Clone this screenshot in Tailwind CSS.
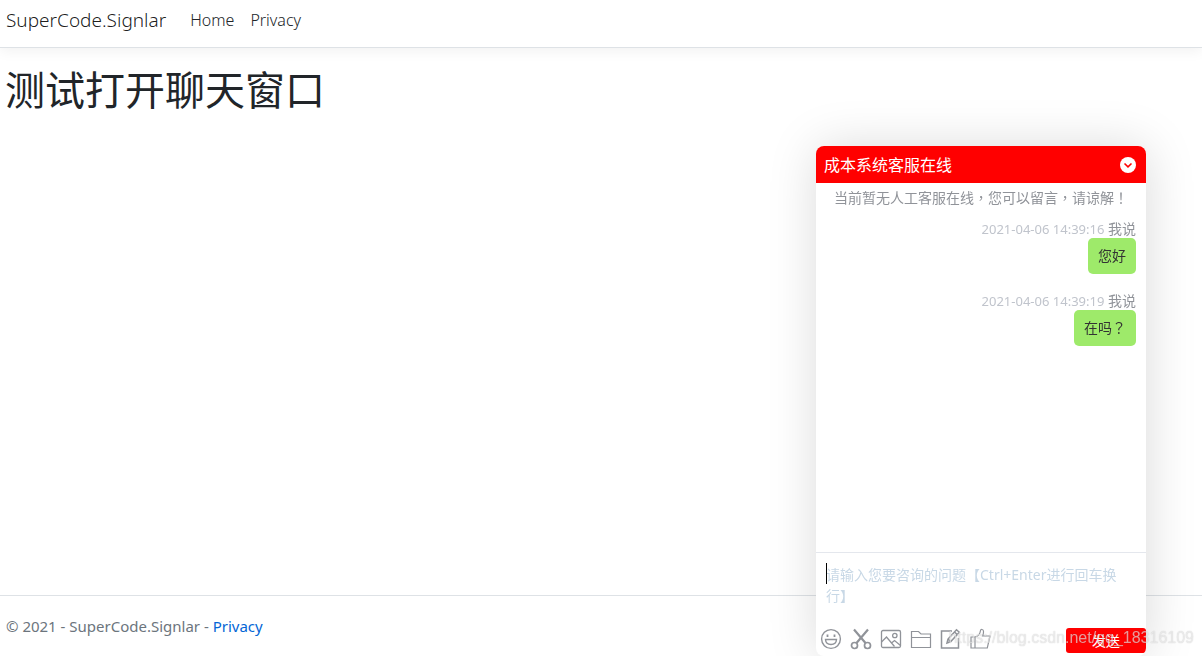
<!DOCTYPE html>
<html lang="zh-CN">
<head>
  <meta charset="UTF-8" />
  <meta name="viewport" content="width=device-width, initial-scale=1.0" />
  <title>Home Page - SuperCode.Signlar</title>
  <script src="https://cdn.jsdelivr.net/npm/@tailwindcss/browser@4"></script>
</head>
<body class="bg-white text-[#212529] min-h-screen flex flex-col overflow-hidden font-['Noto_Sans','Noto_Sans_CJK_SC',sans-serif]">

  <!-- Top Bar -->
  <header class="h-12 shrink-0 border-b border-[#dee2e6] shadow-[0_4px_12px_rgba(0,0,0,0.05)]">
    <nav class="flex items-center h-10 px-[6px]">
      <a href="#" class="text-[19px] font-light text-black/90 mr-6">SuperCode.Signlar</a>
      <a href="#" class="text-base font-light mr-4">Home</a>
      <a href="#" class="text-base font-light">Privacy</a>
    </nav>
  </header>

  <!-- Page Content -->
  <main class="grow px-[5px] pt-[18px]">
    <h1 class="text-[40px] leading-12">测试打开聊天窗口</h1>
  </main>

  <!-- Footer -->
  <footer class="h-[61px] shrink-0 border-t border-[#dee2e6] px-[6px] flex items-center text-[15px] text-[#6c757d]">
    <p>© 2021 - SuperCode.Signlar - <a href="#" class="text-[#0366d6]">Privacy</a></p>
  </footer>

  <!-- Chat Window -->
  <section class="fixed bottom-0 right-14 w-[330px] h-[510px] flex flex-col bg-white rounded-lg overflow-hidden shadow-[1px_1px_50px_rgba(0,0,0,0.15)] text-sm">
    <div class="h-[37px] shrink-0 bg-[#ff0000] text-white flex items-center justify-between pl-2 pr-[10px]">
      <h2 class="text-base">成本系统客服在线</h2>
      <button aria-label="Minimize">
        <svg class="size-4" viewBox="0 0 16 16"><circle cx="8" cy="8" r="8" fill="#fff" /><path d="M4.500 6.500 8 9.800 11.500 6.500" fill="none" stroke="#f00" stroke-width="1.600" /></svg>
      </button>
    </div>

    <div class="grow px-[10px] pt-[5px]">
      <p lang="zh-TW" class="text-center text-[#909399] leading-5 font-['Noto_Sans','Noto_Sans_CJK_TC',sans-serif]">当前暂无人工客服在线，您可以留言，请谅解！</p>
      <ul class="pt-3 flex flex-col gap-[18px]">
        <li class="flex flex-col items-end">
          <p class="leading-[18px] text-[#909399]"><time class="text-[13px] text-[#c0c4cc]">2021-04-06 14:39:16</time> 我说</p>
          <p class="bg-[#9eea6a] text-[#333333] rounded-[5px] px-[10px] py-2 leading-5">您好</p>
        </li>
        <li class="flex flex-col items-end">
          <p class="leading-[18px] text-[#909399]"><time class="text-[13px] text-[#c0c4cc]">2021-04-06 14:39:19</time> 我说</p>
          <p lang="zh-TW" class="bg-[#9eea6a] text-[#333333] rounded-[5px] px-[10px] py-2 leading-5 font-['Noto_Sans','Noto_Sans_CJK_TC',sans-serif]">在吗？</p>
        </li>
      </ul>
    </div>

    <div class="relative shrink-0 border-t border-[#e4e7ed]">
      <textarea aria-label="消息" rows="2" class="block w-full h-[70px] px-[10px] pt-[11px] leading-[21px] resize-none outline-none placeholder:text-[#c8d8e6]" placeholder="请输入您要咨询的问题【Ctrl+Enter进行回车换行】"></textarea>
      <span class="absolute left-[10px] top-[10px] w-px h-[21px] bg-black"></span>
    </div>

    <div class="h-[33px] shrink-0 flex items-end justify-between pl-1 pb-[3px] text-[#909399]">
      <div class="flex gap-2 pb-[3px]">
        <button aria-label="表情">
          <svg class="size-[22px]" viewBox="0 0 22 22" fill="none" stroke="currentColor" stroke-width="1.400"><circle cx="11" cy="11" r="9.400" /><path d="M5.500 11.500h11c-.2 3.200-2.400 5-5.500 5s-5.300-1.800-5.500-5z" /><path d="M7.500 6.500v2.500M14.500 6.500v2.500" stroke-width="1.800" /></svg>
        </button>
        <button aria-label="截图">
          <svg class="size-[22px]" viewBox="0 0 22 22" fill="none" stroke="currentColor" stroke-width="1.700"><circle cx="4.500" cy="17.500" r="3" /><circle cx="17.500" cy="17.500" r="3" /><path d="M4 1.500 15.500 15M18 1.500 6.500 15" stroke-width="2.200" /></svg>
        </button>
        <button aria-label="图片">
          <svg class="size-[22px]" viewBox="0 0 22 22" fill="none" stroke="currentColor" stroke-width="1.300"><rect x="1.500" y="2.500" width="19" height="17" rx="1.500" /><circle cx="14.800" cy="7.500" r="2.200" /><path d="M1.500 14 6.500 9l8 9.500M11.500 15l3-2.500 6 5" /></svg>
        </button>
        <button aria-label="文件">
          <svg class="size-[22px]" viewBox="0 0 22 22" fill="none" stroke="currentColor" stroke-width="1.200"><path d="M1.500 19.500v-16h7l2.500 2.500h9.500v13.500zM1.500 9.500h19" /></svg>
        </button>
        <button aria-label="留言">
          <svg class="size-[22px]" viewBox="0 0 22 22" fill="none" stroke="currentColor" stroke-width="1.500"><path d="M12 3H1.500v17h17V10" /><path d="m7 15 1-4L16.500 1.800l2.800 2.500L10.800 13.500zM14.500 4l2.800 2.500M8 11l2.800 2.500" /></svg>
        </button>
        <button aria-label="评价">
          <svg class="size-[22px]" viewBox="0 0 22 22" fill="none" stroke="currentColor" stroke-width="1.200"><path d="M1 9h4v11H1zM5 9c3-.5 5-2.800 5.500-6.500.3-1.600 2.800-1.300 3 .7.200 1.600-.3 3.300-.8 4.800H20L17.300 20H5" /></svg>
        </button>
      </div>
      <button class="w-20 h-[25px] rounded-[3px] bg-[#ff0000] text-white">发送</button>
    </div>
  </section>

  <!-- Watermark -->
  <div class="fixed bottom-[6px] right-2 pointer-events-none font-['Liberation_Sans',sans-serif] text-base text-white/60 [text-shadow:0_0_1px_rgba(0,0,0,0.25)]">https://blog.csdn.net/qq_18316109</div>

</body>
</html>
